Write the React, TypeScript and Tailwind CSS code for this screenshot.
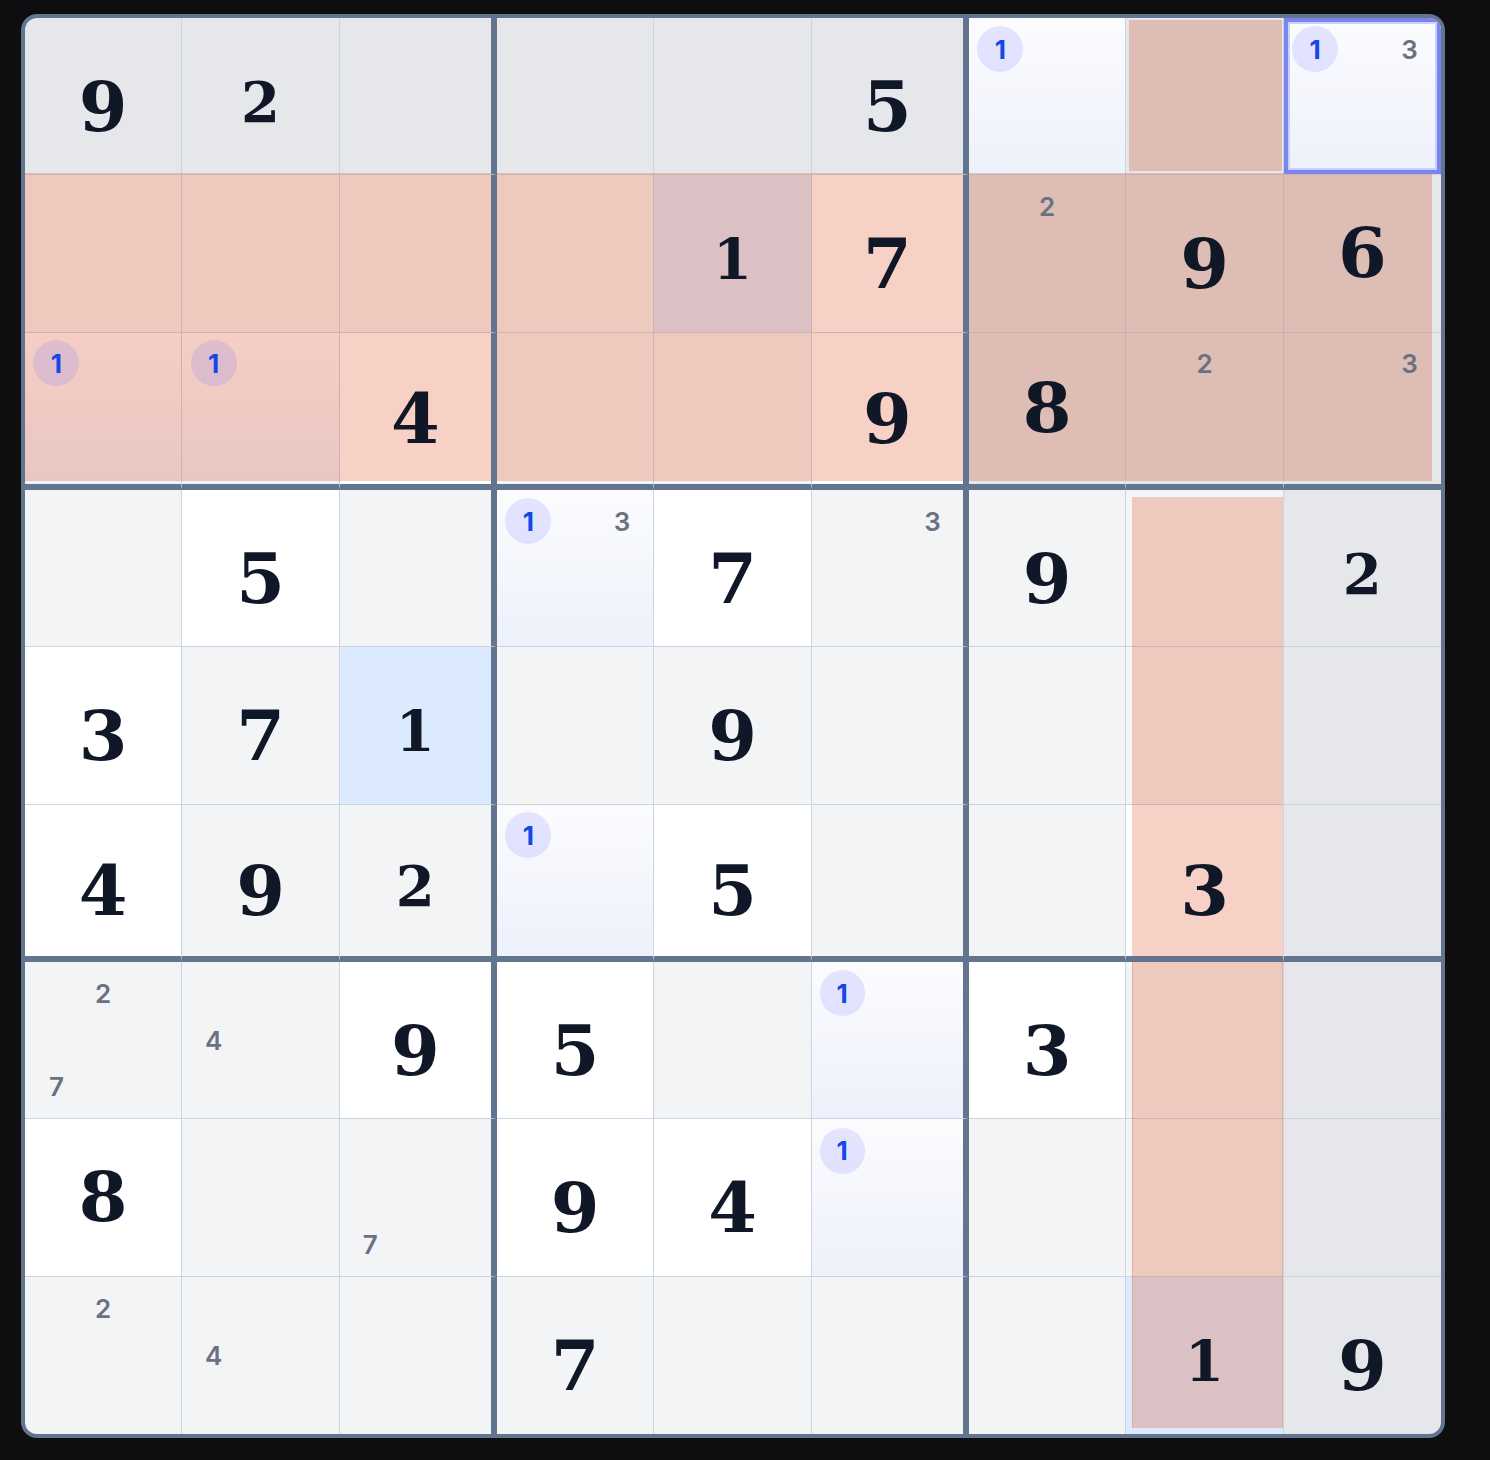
import React from "react"

type Bg = "g1" | "g2" | "w" | "b" | "grad"

type CellData = {
  v?: number
  c?: number[]
  bg: Bg
  sel?: boolean
}

const e = (bg: Bg): CellData => ({ bg })
const d = (v: number, bg: Bg): CellData => ({ v, bg })
const n = (c: number[], bg: Bg, sel = false): CellData => ({ c, bg, sel })

const board: CellData[][] = [
  [d(9, "g2"), d(2, "g2"), e("g2"), e("g2"), e("g2"), d(5, "g2"), n([1], "grad"), e("g2"), n([1, 3], "grad", true)],
  [e("g1"), e("g1"), e("g1"), e("g1"), d(1, "b"), d(7, "w"), n([2], "g2"), d(9, "g2"), d(6, "g2")],
  [n([1], "grad"), n([1], "grad"), d(4, "w"), e("g1"), e("g1"), d(9, "w"), d(8, "g2"), n([2], "g2"), n([3], "g2")],
  [e("g1"), d(5, "w"), e("g1"), n([1, 3], "grad"), d(7, "w"), n([3], "g1"), d(9, "g1"), e("g1"), d(2, "g2")],
  [d(3, "w"), d(7, "g1"), d(1, "b"), e("g1"), d(9, "g1"), e("g1"), e("g1"), e("g1"), e("g2")],
  [d(4, "w"), d(9, "g1"), d(2, "g1"), n([1], "grad"), d(5, "w"), e("g1"), e("g1"), d(3, "w"), e("g2")],
  [n([2, 7], "g1"), n([4], "g1"), d(9, "w"), d(5, "w"), e("g1"), n([1], "grad"), d(3, "w"), e("g1"), e("g2")],
  [d(8, "w"), e("g1"), n([7], "g1"), d(9, "w"), d(4, "w"), n([1], "grad"), e("g1"), e("g1"), e("g2")],
  [n([2], "g1"), n([4], "g1"), e("g1"), d(7, "g1"), e("g1"), e("g1"), e("g1"), d(1, "b"), d(9, "g2")],
]

const bgClass: Record<Bg, string> = {
  g1: "bg-gray-100",
  g2: "bg-gray-200",
  w: "bg-white",
  b: "bg-blue-100",
  grad: "bg-linear-to-b from-[#fcfcfe] to-[#edf1fb]",
}

// old-style figures: 1/2 sit at x-height, 3/4/5/7/9 drop below the baseline
const digitClass: Record<number, string> = {
  1: "text-[56px] pt-[12px]",
  2: "text-[56px] pt-[12px]",
  3: "text-[70px] pt-[22px]",
  4: "text-[70px] pt-[22px]",
  5: "text-[70px] pt-[22px]",
  6: "text-[70px]",
  7: "text-[70px] pt-[22px]",
  8: "text-[70px]",
  9: "text-[70px] pt-[22px]",
}

function colBorder(c: number) {
  if (c === 8) return ""
  if (c === 2 || c === 5) return "border-r-[6px] border-r-slate-500"
  return "border-r border-r-slate-300"
}

function rowBorder(r: number) {
  if (r === 8) return ""
  if (r === 2 || r === 5) return "border-b-[6px] border-b-slate-500"
  return "border-b border-b-slate-300"
}

function Candidates({ list }: { list: number[] }) {
  return (
    <div className="absolute inset-0 z-10 grid grid-cols-3 grid-rows-3 p-2">
      {[1, 2, 3, 4, 5, 6, 7, 8, 9].map((k) => (
        <div key={k} className="flex items-center justify-center">
          {list.includes(k) &&
            (k === 1 ? (
              <span className="flex h-[46px] w-[46px] items-center justify-center rounded-full bg-indigo-500/15 font-['Inter',sans-serif] text-[26px] font-bold text-blue-700">
                1
              </span>
            ) : (
              <span className="font-['Inter',sans-serif] text-[26px] font-semibold text-gray-500">{k}</span>
            ))}
        </div>
      ))}
    </div>
  )
}

function Cell({ cell, r, c }: { cell: CellData; r: number; c: number }) {
  return (
    <div className={`relative flex items-center justify-center ${bgClass[cell.bg]} ${colBorder(c)} ${rowBorder(r)}`}>
      {cell.v !== undefined && (
        <span
          className={`relative z-10 font-['DejaVu_Serif',serif] font-bold leading-none text-gray-900 ${digitClass[cell.v]}`}
        >
          {cell.v}
        </span>
      )}
      {cell.c && <Candidates list={cell.c} />}
      {cell.sel && (
        <div className="absolute inset-0 z-10 border-4 border-[#7b84ec] shadow-[inset_0_0_0_2px_#c7d2fe]" />
      )}
    </div>
  )
}

export default function App() {
  return (
    <div className="min-h-screen bg-[#0e0e11] pl-[21px] pt-[14px]">
      <div className="h-[1424px] w-[1424px] overflow-hidden rounded-2xl border-4 border-slate-500 bg-slate-500">
        <div className="relative grid h-full w-full grid-cols-9 grid-rows-9">
          {board.map((row, r) => row.map((cell, c) => <Cell key={`${r}-${c}`} cell={cell} r={r} c={c} />))}

          {/* region highlights laid over the cells */}
          <div className="absolute left-0 top-[155px] h-[308px] w-[466px] bg-[#df4717]/25" />
          <div className="absolute left-[472px] top-[155px] h-[308px] w-[466px] bg-[#df4717]/25" />
          <div className="absolute left-[944px] top-[155px] h-[308px] w-[463px] bg-[#cd3f0f]/25" />
          <div className="absolute left-[1104px] top-[2px] h-[151px] w-[153px] bg-[#cd3f0f]/25" />
          <div className="absolute left-[1107px] top-[479px] h-[459px] w-[151px] bg-[#df4717]/25" />
          <div className="absolute left-[1107px] top-[944px] h-[466px] w-[151px] border-x border-x-[#df4717]/20 bg-[#df4717]/25" />
        </div>
      </div>
    </div>
  )
}
